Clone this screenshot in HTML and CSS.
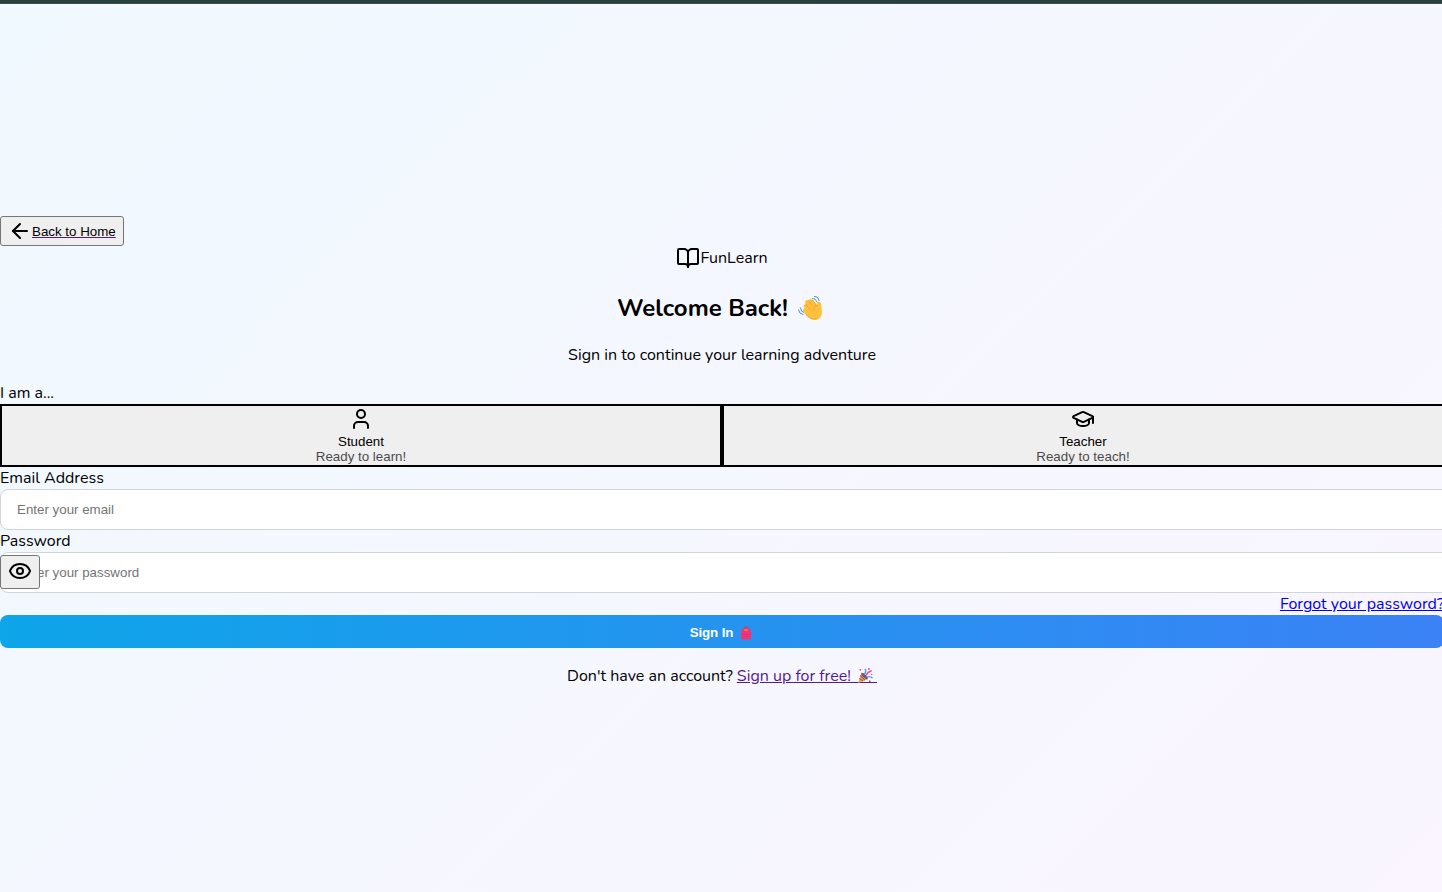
FILE: index.html
```html
<!DOCTYPE html>
<html lang="en">
<head>
<meta charset="utf-8">
<title>FunLearn</title>
<link rel="stylesheet" href="styles.css">
</head>
<body>
<div class="topbar"></div>
<main class="page">
  <a class="home" href="#"><button class="back" type="button"><svg class="icon" viewBox="0 0 24 24"><path d="m12 19-7-7 7-7"/><path d="M19 12H5"/></svg><span class="back-text">Back to Home</span></button></a>
  <div class="logo"><svg class="icon" viewBox="0 0 24 24"><path d="M12 7v14"/><path d="M3 18a1 1 0 0 1-1-1V4a1 1 0 0 1 1-1h5a4 4 0 0 1 4 4 4 4 0 0 1 4-4h5a1 1 0 0 1 1 1v13a1 1 0 0 1-1 1h-6a3 3 0 0 0-3 3 3 3 0 0 0-3-3z"/></svg><span>FunLearn</span></div>
  <h2 class="title"><span>Welcome Back!</span><svg class="wave" viewBox="0 0 26 26"><g fill="none" stroke="#4a90c8" stroke-width="1" stroke-linecap="round"><path d="M15 3.500q3-.5 4 3M17 1.500q4 0 4.500 4M3 13q0 4 3.500 4.500M1 15q.5 4 4.500 4.500"/></g><path fill="#ffc13b" d="M7 13Q5 10 8 9L7.500 6.500Q9 4 11 5.500Q12 3 15 4.500L19.500 10V7.500Q22 5 23.500 8.500L24.500 17Q24 25 17 25Q12 25 7 18Q4 15 7 13Z"/><path fill="none" stroke="#ef9b27" stroke-width=".7" stroke-linecap="round" d="m8 9 5 6M11 5.500l5 6.500M15 5l4 6M8 19q5 6 11 5M20 10q-4 1-3 5"/></svg></h2>
  <p class="lead">Sign in to continue your learning adventure</p>
  <form class="form">
    <label class="label">I am a...</label>
    <div class="roles">
      <button class="role" type="button"><svg class="icon" viewBox="0 0 24 24"><path d="M19 21v-2a4 4 0 0 0-4-4H9a4 4 0 0 0-4 4v2"/><circle cx="12" cy="7" r="4"/></svg><span>Student</span><span class="hint">Ready to learn!</span></button>
      <button class="role" type="button"><svg class="icon" viewBox="0 0 24 24"><path d="M21.42 10.922a1 1 0 0 0-.019-1.838L12.83 5.18a2 2 0 0 0-1.66 0L2.6 9.08a1 1 0 0 0 0 1.832l8.57 3.908a2 2 0 0 0 1.66 0z"/><path d="M22 10v6"/><path d="M6 12.5V16a6 3 0 0 0 12 0v-3.5"/></svg><span>Teacher</span><span class="hint">Ready to teach!</span></button>
    </div>
    <label class="label">Email Address</label>
    <input class="input" type="email" placeholder="Enter your email">
    <label class="label">Password</label>
    <div class="field">
      <input class="input" type="password" placeholder="Enter your password">
      <button class="eye" type="button"><svg class="icon" viewBox="0 0 24 24"><path d="M2.062 12.348a1 1 0 0 1 0-.696 10.75 10.75 0 0 1 19.876 0 1 1 0 0 1 0 .696 10.75 10.75 0 0 1-19.876 0"/><circle cx="12" cy="12" r="3"/></svg></button>
    </div>
    <div class="forgot"><a class="forgot-link" href="#">Forgot your password?</a></div>
    <button class="submit" type="button"><span class="submit-text">Sign In</span><svg class="bag" viewBox="0 0 12 14"><path d="M4 3V2q0-1 2-1t2 1v1" fill="none" stroke="#d53345" stroke-width="1"/><path d="M1 13V7Q1 2.500 4 2.500h4Q11 2.500 11 7v6Q6 14 1 13Z" fill="#f8316f"/><path d="M1 8.500h10M3 10.500h6" stroke="#e02f78" stroke-width=".8"/><path d="M4 4h4" stroke="#ff9345"/></svg></button>
  </form>
  <p class="signup"><span>Don't have an account?</span><a class="join" href="#"><span>Sign up for free!</span><span class="party-box"><svg class="party" viewBox="0 0 18 18"><path d="m5 6 7 7-10 4Z" fill="#f4b03e"/><path d="m4 9 5 5M3 12l4 3" stroke="#875b7b" stroke-width="1.2"/><ellipse cx="8.500" cy="9.500" rx="1.600" ry="4.500" transform="rotate(-45 8.500 9.500)" fill="#735078"/><g fill="none" stroke-width="1.500"><path d="M8 8q3-3 1-6" stroke="#4a9ded"/><path d="M10 9q2-4 6-5" stroke="#f04b80"/><path d="M11 11q3-2 6 1" stroke="#4a9ded"/></g><g fill="#ee4778"><circle cx="4" cy="3" r="1"/><circle cx="13" cy="2" r="1"/><circle cx="14" cy="15" r="1"/><circle cx="16" cy="8" r=".8"/></g></svg></span></a></p>
</main>
</body>
</html>
```
FILE: styles.css
```css
* { box-sizing: border-box; }
body {
  margin: 0;
  height: 892px;
  overflow: hidden;
  font: 16px/22px Nunito, "Open Sans", sans-serif;
  color: #000;
  background: linear-gradient(135deg, #f0f9ff 0%, #faf5ff 100%);
}
button { font: 13.333px/15px "Liberation Sans", Arial, sans-serif; color: #000; }
.topbar { height: 4px; background: #28413e; border-bottom: 1px solid #41504f; }
.page { width: 1444px; padding-top: 212px; }
.icon { width: 24px; height: 24px; flex: none; fill: none; stroke: #000; stroke-width: 2; stroke-linecap: round; stroke-linejoin: round; }
.home { display: flex; width: 124px; text-decoration: none; }
.back { display: flex; align-items: center; width: 124px; height: 30px; padding: 0 0 0 7px; border: 1px solid #767676; border-radius: 3px; background: #efefef; white-space: nowrap; }
.back-text { text-decoration: underline #551a8b; }
.logo { display: flex; justify-content: center; align-items: center; height: 24px; }
.title { display: flex; justify-content: center; align-items: center; gap: 9px; height: 34px; margin: 20px 0; padding: 2px 3px 0 0; font-size: 24px; line-height: 32px; }
.wave { width: 27px; height: 26px; }
.lead { margin: 0 0 16px; text-align: center; }
.form { display: flex; flex-direction: column; }
.label { height: 22px; }
.roles { display: grid; grid-template-columns: 722px 722px; }
.role { display: flex; flex-direction: column; align-items: center; height: 63px; padding: 1px 6px; border: 2px solid #000; background: #efefef; }
.role .icon { margin-bottom: 3px; }
.hint { opacity: .7; }
.input { display: block; width: 1478px; height: 41px; padding: 0 16px; border: 1px solid #d1d5db; border-radius: 8px; background: #fff; font: 13.333px "Liberation Sans", Arial, sans-serif; }
.input::placeholder { color: #757575; }
.field { position: relative; }
.eye { position: absolute; left: 0; top: 3px; width: 40px; height: 34px; padding: 2px 7px 4px; border: 1px solid #767676; border-radius: 3px; background: #efefef; }
.eye .icon { display: block; }
.forgot { display: flex; justify-content: flex-end; height: 22px; }
.forgot-link { color: #0000ee; }
.submit { display: flex; justify-content: center; align-items: center; gap: 7px; height: 33px; padding: 2px 2px 0 0; border: 0; border-radius: 8px; background: linear-gradient(90deg, #0ea5e9, #3b82f6); color: #fff; font-weight: bold; }
.submit-text { letter-spacing: -.1px; }
.bag { width: 12px; height: 14px; }
.signup { display: flex; justify-content: center; gap: 4px; margin: 17px 0 0; }
.join { display: flex; align-items: flex-start; color: #551a8b; }
.party-box { display: flex; width: 26px; height: 18px; padding: 2px 0 0 5px; border-bottom: 1px solid #551a8b; }
.party { width: 18px; height: 17px; }
```
